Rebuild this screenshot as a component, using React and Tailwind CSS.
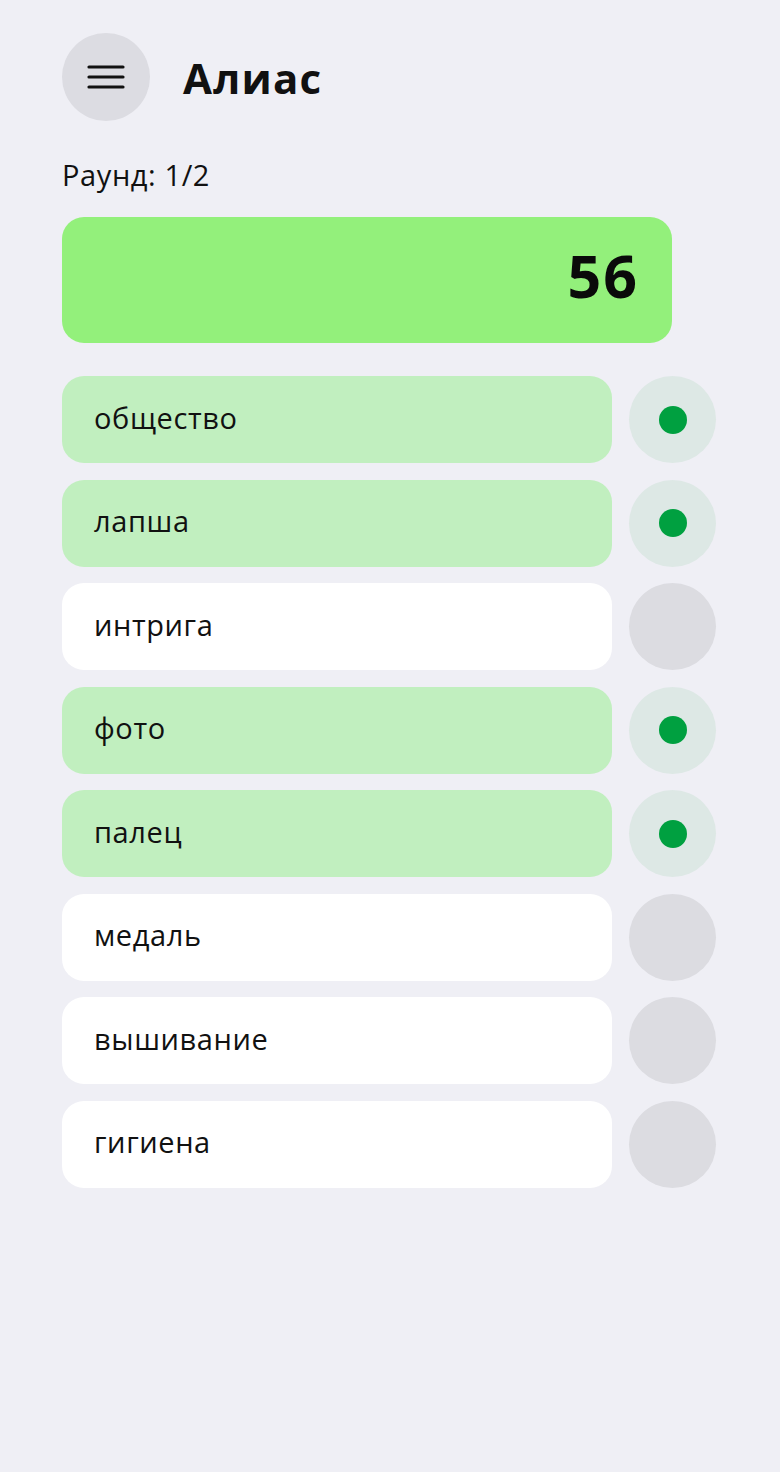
import React from "react";

const words = [
  { text: "общество", done: true },
  { text: "лапша", done: true },
  { text: "интрига", done: false },
  { text: "фото", done: true },
  { text: "палец", done: true },
  { text: "медаль", done: false },
  { text: "вышивание", done: false },
  { text: "гигиена", done: false },
];

function WordRow({ text, done }) {
  return (
    <div className="flex items-center gap-[17px]">
      <div
        className={
          "flex h-[87px] w-[550px] items-center rounded-[22px] pb-[4px] pl-[32px] text-[29px] tracking-[0.6px] text-[#111] " +
          (done ? "bg-[#c1efbf]" : "bg-white")
        }
      >
        {text}
      </div>
      <div
        className={
          "flex h-[87px] w-[87px] items-center justify-center rounded-full " +
          (done ? "bg-[#dde8e5]" : "bg-[#dcdce1]")
        }
      >
        {done && <div className="h-[28px] w-[28px] rounded-full bg-[#00a040]" />}
      </div>
    </div>
  );
}

export default function App() {
  return (
    <div
      className="min-h-[1472px] w-[780px] bg-[#efeff5] pl-[62px] pt-[33px]"
      style={{ fontFamily: '"Open Sans", "Noto Sans", sans-serif' }}
    >
      <header className="flex items-center gap-[33px]">
        <button className="flex h-[88px] w-[88px] items-center justify-center rounded-full bg-[#dcdce2]">
          <svg width="38" height="24" viewBox="0 0 38 24" fill="none">
            <path d="M2 2h34M2 12h34M2 22h34" stroke="#111" strokeWidth="3.2" strokeLinecap="round" />
          </svg>
        </button>
        <h1 className="text-[42px] font-bold tracking-[1.2px] text-[#111]">Алиас</h1>
      </header>

      <div className="mt-[35px] text-[29px] leading-[38px] tracking-[0.6px] text-[#111]">Раунд: 1/2</div>

      <div className="mt-[23px] flex h-[126px] w-[610px] items-center justify-end rounded-[22px] bg-[#93f07b] pb-[9px] pr-[33px]">
        <span className="text-[59px] font-bold tracking-[2px] text-[#0a0a0a]">56</span>
      </div>

      <div className="mt-[33px] flex flex-col gap-[16.5px]">
        {words.map((w) => (
          <WordRow key={w.text} {...w} />
        ))}
      </div>
    </div>
  );
}
